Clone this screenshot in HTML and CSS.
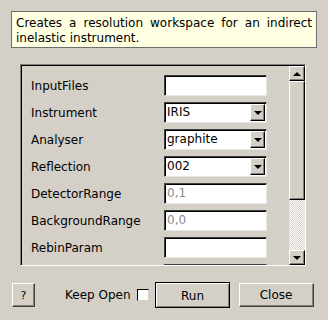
FILE: index.html
```html
<!DOCTYPE html>
<html>
<head>
<meta charset="utf-8">
<link rel="stylesheet" href="styles.css">
</head>
<body>
<div class="dialog">
  <div class="tip">Creates a resolution workspace for an indirect inelastic instrument.</div>
  <div class="panel">
    <div class="rows">
      <div class="row"><span class="lbl">InputFiles</span><div class="field"></div></div>
      <div class="row"><span class="lbl">Instrument</span><div class="field combo"><span class="val">IRIS</span><span class="drop"><span class="arrow"></span></span></div></div>
      <div class="row"><span class="lbl">Analyser</span><div class="field combo"><span class="val">graphite</span><span class="drop"><span class="arrow"></span></span></div></div>
      <div class="row"><span class="lbl">Reflection</span><div class="field combo"><span class="val">002</span><span class="drop"><span class="arrow"></span></span></div></div>
      <div class="row"><span class="lbl">DetectorRange</span><div class="field"><span class="val dim">0,1</span></div></div>
      <div class="row"><span class="lbl">BackgroundRange</span><div class="field"><span class="val dim">0,0</span></div></div>
      <div class="row"><span class="lbl">RebinParam</span><div class="field"></div></div>
      <div class="row"><span class="lbl"></span><div class="field"></div></div>
    </div>
    <div class="scrollbar">
      <div class="sbtn"><span class="arrow up"></span></div>
      <div class="thumb"></div>
      <div class="track"></div>
      <div class="sbtn"><span class="arrow"></span></div>
    </div>
  </div>
  <div class="footer">
    <div class="btn help">?</div>
    <div class="keep">Keep Open <span class="check"></span></div>
    <div class="btn run">Run</div>
    <div class="btn close">Close</div>
  </div>
</div>
</body>
</html>
```

FILE: styles.css
```css
html, body {
  margin: 0;
  padding: 0;
  background: #d4d0c8;
}
.dialog {
  width: 328px;
  height: 320px;
  display: flex;
  flex-direction: column;
  font-family: "DejaVu Sans", sans-serif;
  font-size: 12px;
  color: #000;
  overflow: hidden;
}
.tip {
  margin: 11px 11px 0 11px;
  box-sizing: content-box;
  border: 1px solid #6e6e6e;
  background: #ffffe1;
  padding: 4px 4px 0 4px;
  line-height: 15px;
  height: 31px;
  text-align: justify;
}
.panel {
  margin: 16px 0 0 20px;
  width: 286px;
  height: 202px;
  box-sizing: border-box;
  border-top: 1px solid #808080;
  border-left: 1px solid #808080;
  border-right: 1px solid #fff;
  border-bottom: 1px solid #fff;
  box-shadow: inset 1px 1px 0 #000;
  display: flex;
  overflow: hidden;
}
.rows {
  flex: 1;
  padding: 10px 0 0 10px;
  display: flex;
  flex-direction: column;
  gap: 6px;
  overflow: hidden;
}
.row {
  display: flex;
  align-items: center;
  height: 21px;
  flex: none;
}
.lbl {
  width: 133px;
  flex: none;
}
.field {
  width: 103px;
  height: 21px;
  box-sizing: border-box;
  background: #fff;
  border-top: 1px solid #404040;
  border-left: 1px solid #404040;
  border-right: 1px solid #e8e6e1;
  border-bottom: 1px solid #e8e6e1;
  box-shadow: inset 1px 1px 0 #000;
  display: flex;
  align-items: center;
  padding-left: 2px;
}
.val {
  flex: 1;
  line-height: 19px;
}
.dim {
  color: #8c8c8c;
}
.drop {
  width: 15px;
  height: 17px;
  box-sizing: border-box;
  background: #d4d0c8;
  border-top: 1px solid #fff;
  border-left: 1px solid #fff;
  border-right: 1px solid #000;
  border-bottom: 1px solid #000;
  box-shadow: inset -1px -1px 0 #808080;
  margin-right: 1px;
  display: flex;
  align-items: center;
  justify-content: center;
}
.arrow {
  width: 0;
  height: 0;
  border-left: 4px solid transparent;
  border-right: 4px solid transparent;
  border-top: 4px solid #000;
}
.arrow.up {
  border-top: none;
  border-bottom: 4px solid #000;
}
.scrollbar {
  width: 16px;
  flex: none;
  margin: 1px 0 0 0;
  display: flex;
  flex-direction: column;
}
.sbtn, .thumb {
  box-sizing: border-box;
  background: #d4d0c8;
  border-top: 1px solid #fff;
  border-left: 1px solid #fff;
  border-right: 1px solid #000;
  border-bottom: 1px solid #000;
  box-shadow: inset -1px -1px 0 #808080;
}
.sbtn {
  height: 15px;
  display: flex;
  align-items: center;
  justify-content: center;
  flex: none;
}
.thumb {
  height: 119px;
  flex: none;
}
.track {
  flex: 1;
  background: repeating-conic-gradient(#fff 0 25%, #d4d0c8 0 50%) 0 0 / 2px 2px;
}
.footer {
  margin-top: 16px;
  display: flex;
  align-items: center;
  padding-left: 12px;
}
.btn {
  box-sizing: border-box;
  background: #d4d0c8;
  border-top: 1px solid #fff;
  border-left: 1px solid #fff;
  border-right: 1px solid #404040;
  border-bottom: 1px solid #404040;
  box-shadow: inset -1px -1px 0 #808080;
  display: flex;
  align-items: center;
  justify-content: center;
}
.help {
  width: 23px;
  height: 24px;
  font-size: 11px;
}
.keep {
  margin-left: 30px;
  display: flex;
  align-items: center;
  gap: 6px;
}
.check {
  width: 12px;
  height: 12px;
  box-sizing: border-box;
  background: #fff;
  border-top: 1px solid #000;
  border-left: 1px solid #000;
  border-right: 1px solid #d4d0c8;
  border-bottom: 1px solid #d4d0c8;
}
.run {
  margin-left: 6px;
  width: 75px;
  height: 26px;
  outline: 1px solid #000;
  outline-offset: -1px;
  border-top: 2px solid #fff;
  border-left: 2px solid #fff;
}
.close {
  margin-left: 9px;
  width: 75px;
  height: 24px;
}
```
